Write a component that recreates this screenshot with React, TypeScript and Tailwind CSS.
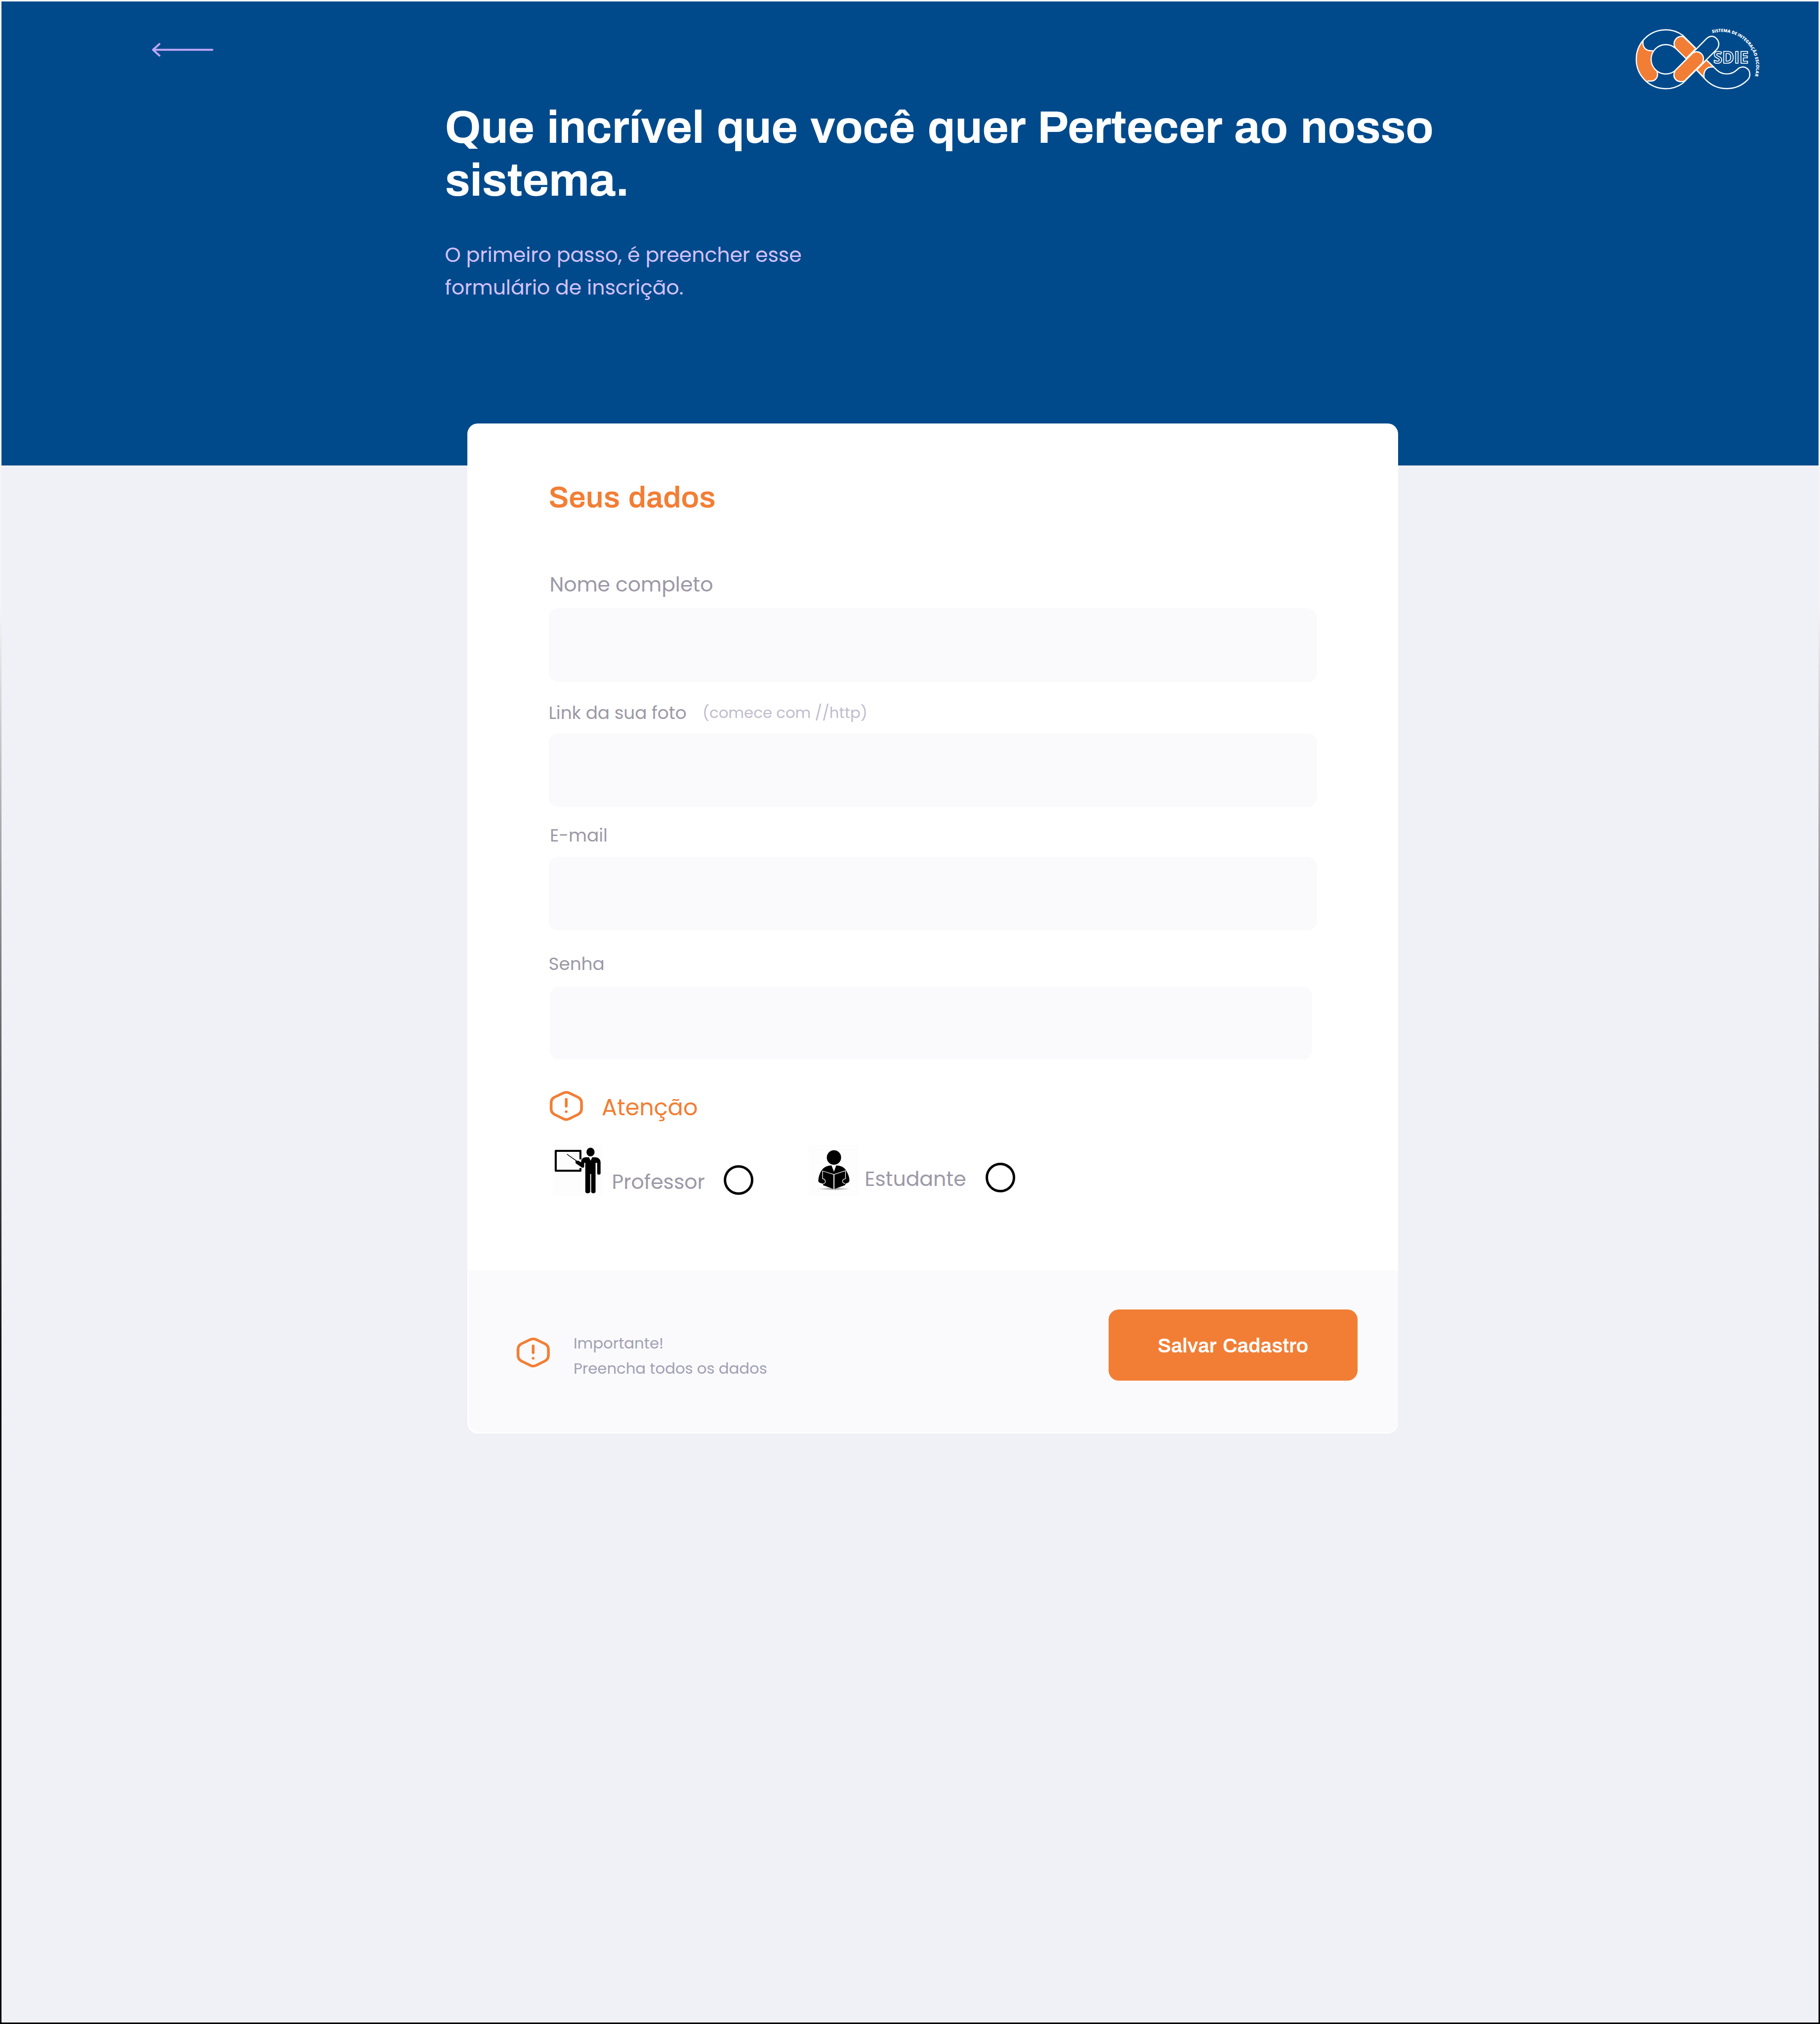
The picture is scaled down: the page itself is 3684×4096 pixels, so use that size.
function BackArrow() {
  return (
    <svg
      className="mt-[49px] ml-[304px] h-[28.9px] w-[125.9px]"
      viewBox="100 98 410 94"
      fill="none"
      stroke="#bfa6f5"
      strokeWidth="13"
      strokeLinecap="round"
      strokeLinejoin="round"
    >
      <path d="M109 146H500M151 108L109 146L151 184" />
    </svg>
  );
}

function Logo() {
  return (
    <svg
      className="mr-[98.3px] h-[165.8px] w-[294.7px]"
      viewBox="0 0 960 540"
      fill="none"
      stroke="#ffffff"
      strokeWidth="8"
      strokeLinejoin="round"
    >
      <defs>
        <path id="logo-arc" d="M580 98A229 229 0 0 1 857 393" />
      </defs>
      {/* left ring */}
      <path
        fill="#f27e35"
        stroke="none"
        d="M120 150A194 194 0 0 0 154 420L160 414H175C205 414 228 385 217 350A97 97 0 0 1 189 216C145 218 122 195 120 150Z"
      />
      <path d="M385 112A194 194 0 1 0 385 428" />
      <path d="M337 197A97 97 0 1 0 335 345" />
      <path d="M124 146C116 190 140 218 189 214" />
      <path d="M215 349C228 385 205 414 175 414H152" />
      {/* descending band */}
      <path
        fill="#f27e35"
        d="M337 197C312 155 345 112 388 121L471 200L407 266Z"
      />
      <path d="M384 111L471 198" />
      <path
        fill="#f27e35"
        d="M541 275L590 322C545 315 518 345 526 391L476 341Z"
      />
      {/* ascending band */}
      <path d="M335 345L541 135C565 112 590 116 606 132C628 153 628 185 607 207L384 429" />
      <path
        fill="#f27e35"
        d="M335 345L450 230C470 215 493 219 508 234C527 253 525 282 508 302L398 412C378 422 350 418 337 402C324 388 323 365 335 345Z"
      />
      {/* right hook */}
      <path d="M541 275L608 340A97 97 0 0 0 742 340C760 322 777 318 795 323C818 331 829 352 827 376C826 388 822 397 812 407A194 194 0 0 1 538 407L476 341" />
      <text
        x="587"
        y="297"
        textLength="231"
        lengthAdjust="spacingAndGlyphs"
        fontFamily="'Open Sans', 'Liberation Sans', sans-serif"
        fontSize="111"
        fontWeight="700"
        strokeWidth="5.5"
        fill="#004a8b"
      >
        SDIE
      </text>
      <text
        fontFamily="'Open Sans', 'Liberation Sans', sans-serif"
        fontSize="28"
        fontWeight="800"
        fill="#ffffff"
        stroke="none"
      >
        <textPath href="#logo-arc" textLength="484" lengthAdjust="spacingAndGlyphs">
          SISTEMA DE INTEGRAÇÃO ESCOLAR
        </textPath>
      </text>
    </svg>
  );
}

function WarningIcon() {
  return (
    <svg
      className="h-[62px] w-[68.7px] shrink-0"
      viewBox="76 106 209 202"
      preserveAspectRatio="none"
      fill="none"
      stroke="#f27e35"
      strokeWidth="17"
      strokeLinecap="round"
      strokeLinejoin="round"
    >
      <path d="M164 121Q180 114 197 121L253 150Q274 162 274 186V228Q274 250 253 263L197 293Q180 301 164 293L107 263Q87 250 87 228V186Q87 162 107 150Z" />
      <path d="M180 163V209" />
      <circle cx="180" cy="245" r="8.5" fill="#f27e35" stroke="none" />
    </svg>
  );
}

function TeacherIcon() {
  return (
    <svg
      className="h-[103px] w-[102.3px] shrink-0 bg-[#fdfdfd]"
      viewBox="95 468 311 335"
      preserveAspectRatio="none"
    >
      <path
        d="M268 563V507H116V638H268V620"
        fill="none"
        stroke="#000"
        strokeWidth="12.5"
        strokeLinejoin="round"
      />
      <path d="M185 529L245 574" stroke="#000" strokeWidth="5" />
      <ellipse cx="330" cy="515" rx="25" ry="29" />
      <path d="M320 549L331 571L341 549H357C380 549 392 562 392 585V655C392 666 371 666 371 655V586H361V775C361 790 334 790 334 775V659H328V775C328 790 298 790 298 775V586H291V610C291 619 281 620 275 615L238 588V572H255L272 583C272 560 285 549 300 549Z" />
    </svg>
  );
}

function StudentIcon() {
  return (
    <svg
      className="h-[103px] w-[101.5px] shrink-0 bg-[#fdfdfd]"
      viewBox="106 108 308 336"
      preserveAspectRatio="none"
    >
      <defs>
        <radialGradient id="book-shadow">
          <stop offset="0" stopColor="#8a8a8f" />
          <stop offset="1" stopColor="#fdfdfd" />
        </radialGradient>
      </defs>
      <ellipse cx="260" cy="398" rx="104" ry="10" fill="url(#book-shadow)" />
      <ellipse cx="261" cy="191" rx="44" ry="48" />
      <path d="M246 243L261 285L275 243C300 243 325 255 335 275C348 300 356 320 356 342C356 352 350 358 335 362L328 374L265 398H257L194 374V364C178 358 165 358 165 345C165 320 175 290 188 272C200 252 225 243 246 243Z" />
      <g fill="none" stroke="#fff" strokeWidth="4">
        <path d="M194 365C213 364 213 333 191 331V280L261 303L332 278V331C308 334 308 362 330 362" />
        <path d="M261 303V400" strokeWidth="6" />
      </g>
    </svg>
  );
}

const inputClass =
  "block h-[149px] w-[1556px] rounded-[20px] bg-[#fafafc] px-10 text-[41px] outline-none";

const radioClass =
  "block size-[60px] shrink-0 appearance-none rounded-full border-[5.8px] border-black bg-white";

export default function App() {
  return (
    <div className="h-[4096px] w-[3684px] bg-linear-to-b from-[#f5f5f5] from-30% to-black to-75% p-[3px] font-[Poppins,Inter,sans-serif]">
      <div className="h-full bg-[#f0f0f7]">
        <header className="h-[938.5px] bg-[#004a8b] pt-[33.8px]">
          <div className="flex items-start justify-between">
            <BackArrow />
            <Logo />
          </div>
          <div className="mt-[2px] ml-[897.5px] w-[2100px]">
            <h1 className="font-[Archivo,'Liberation_Sans',sans-serif] text-[92.16px] leading-[107.5px] font-bold tracking-[-0.4px] text-white [word-spacing:7.8px]">
              Que incrível que você quer Pertecer ao nosso
              <br />
              sistema.
            </h1>
            <p className="mt-[63px] text-[40.96px] leading-[66.6px] text-[#d4c2ff]">
              O primeiro passo, é preencher esse
              <br />
              formulário de inscrição.
            </p>
          </div>
        </header>

        <form className="-mt-[85px] ml-[943px] w-[1884px] rounded-[21px] bg-white pb-[2.5px]">
          <div className="h-[1714.3px] pt-[117.2px] pl-[164.4px]">
            <h2 className="font-[Archivo,'Liberation_Sans',sans-serif] text-[61.44px] leading-[66px] font-semibold text-[#f27e35] [word-spacing:4.5px]">
              Seus dados
            </h2>

            <label className="mt-[110.8px] ml-[2px] block text-[40.96px] leading-[66px] text-[#9c98a6]">
              Nome completo
            </label>
            <input className={`${inputClass} mt-[14.3px]`} />

            <div className="mt-[32.8px] flex h-[60px] items-start leading-[60px]">
              <label className="w-[311.6px] text-[35.84px] text-[#9c98a6]">Link da sua foto</label>
              <span className="text-[30.8px] text-[#c1bccc]">(comece com //http)</span>
            </div>
            <input className={`${inputClass} mt-[11.2px]`} />

            <label className="mt-[27.8px] ml-[2.5px] block text-[35.84px] leading-[60px] text-[#9c98a6]">
              E-mail
            </label>
            <input className={`${inputClass} mt-[13.4px]`} />

            <label className="mt-[38.2px] block text-[35.84px] leading-[60px] text-[#9c98a6]">
              Senha
            </label>
            <input
              type="password"
              className="mt-[14.6px] ml-[2.3px] block h-[149px] w-[1543px] rounded-[20px] bg-[#fafafc] px-10 text-[41px] outline-none"
            />

            <div className="mt-[62px] ml-[1.4px] flex h-[66px] items-start">
              <WarningIcon />
              <span className="mt-[1.3px] ml-[37.5px] text-[46.08px] leading-[66px] text-[#f27e35]">
                Atenção
              </span>
            </div>

            <div className="mt-[44.5px] ml-[7.6px] flex items-start text-[40.96px] leading-[66px] text-[#9c98a6]">
              <TeacherIcon />
              <span className="mt-[41.3px] ml-[18.2px] w-[226.8px]">Professor</span>
              <input type="radio" name="role" className={`${radioClass} mt-[40.6px]`} />
              <div className="w-[112.2px]" />
              <StudentIcon />
              <span className="mt-[35.3px] ml-[11.2px] w-[244.7px]">Estudante</span>
              <input type="radio" name="role" className={`${radioClass} mt-[36px]`} />
            </div>
          </div>

          <footer className="ml-[3px] flex h-[327.6px] items-start rounded-b-[20px] bg-[#fafafc] pr-[82.2px] pl-[96.2px]">
            <div className="mt-[135px]">
              <WarningIcon />
            </div>
            <p className="mt-[122.4px] ml-[47.2px] text-[30.72px] leading-[51.2px] text-[#a0a0b2]">
              Importante!
              <br />
              Preencha todos os dados
            </p>
            <button
              type="button"
              className="mt-[79.2px] ml-auto flex h-[144px] w-[504.2px] items-center justify-center rounded-[20.5px] bg-[#f27e35] pt-[4px] font-[Archivo,'Liberation_Sans',sans-serif] text-[40.96px] font-semibold text-white [word-spacing:5px]"
            >
              Salvar Cadastro
            </button>
          </footer>
        </form>
      </div>
    </div>
  );
}
